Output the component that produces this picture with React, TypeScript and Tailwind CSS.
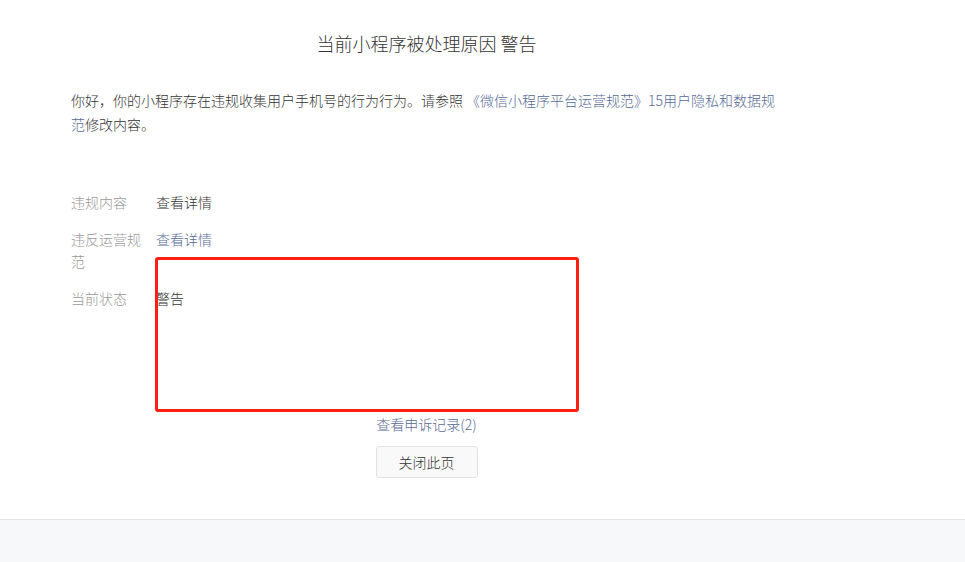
import React from "react";

const font = { fontFamily: '"Noto Sans CJK SC", "Noto Sans", sans-serif' };

export default function App() {
  return (
    <div
      className="relative flex h-[562px] w-[965px] flex-col overflow-hidden bg-[#f7f8fa] font-light text-[#353535]"
      style={font}
    >
      <div className="h-[520px] border-b border-[#e2e2e2] bg-white pl-[71px]">
        <div className="w-[711px]">
          <h1 className="pt-[30px] text-center text-[18px] font-light leading-[26px] text-[#353535]">
            当前小程序被处理原因 警告
          </h1>
          <p className="mt-[32px] text-[14px] leading-[24px] text-[#353535]">
            你好，你的小程序存在违规收集用户手机号的行为行为。请参照{" "}
            <a className="text-[#576b95]">《微信小程序平台运营规范》15用户隐私和数据规范</a>
            修改内容。
          </p>
          <div className="mt-[55px] flex flex-col gap-[15px] text-[14px] leading-[22px]">
            <div className="flex">
              <div className="w-[85px] shrink-0 pr-[12px] text-[#9a9a9a]">违规内容</div>
              <div className="text-[#353535]">查看详情</div>
            </div>
            <div className="flex">
              <div className="w-[85px] shrink-0 pr-[12px] text-[#9a9a9a]">违反运营规范</div>
              <div className="text-[#576b95]">查看详情</div>
            </div>
            <div className="flex">
              <div className="w-[85px] shrink-0 pr-[12px] text-[#9a9a9a]">当前状态</div>
              <div className="text-[#353535]">警告</div>
            </div>
          </div>
          <div className="mt-[104px] flex flex-col items-center">
            <a className="text-[14px] leading-[22px] text-[#576b95]">查看申诉记录(2)</a>
            <button className="mt-[11px] h-[32px] w-[102px] rounded-[3px] border border-[#e3e3e3] bg-[#f9f9f9] text-[14px] text-[#353535]">
              关闭此页
            </button>
          </div>
        </div>
      </div>
      <div className="flex-1 bg-[#f7f8fa]" />
      <div className="absolute left-[155px] top-[257px] h-[155px] w-[424px] rounded-[3px] border-[3px] border-[#ff1f14]" />
    </div>
  );
}
